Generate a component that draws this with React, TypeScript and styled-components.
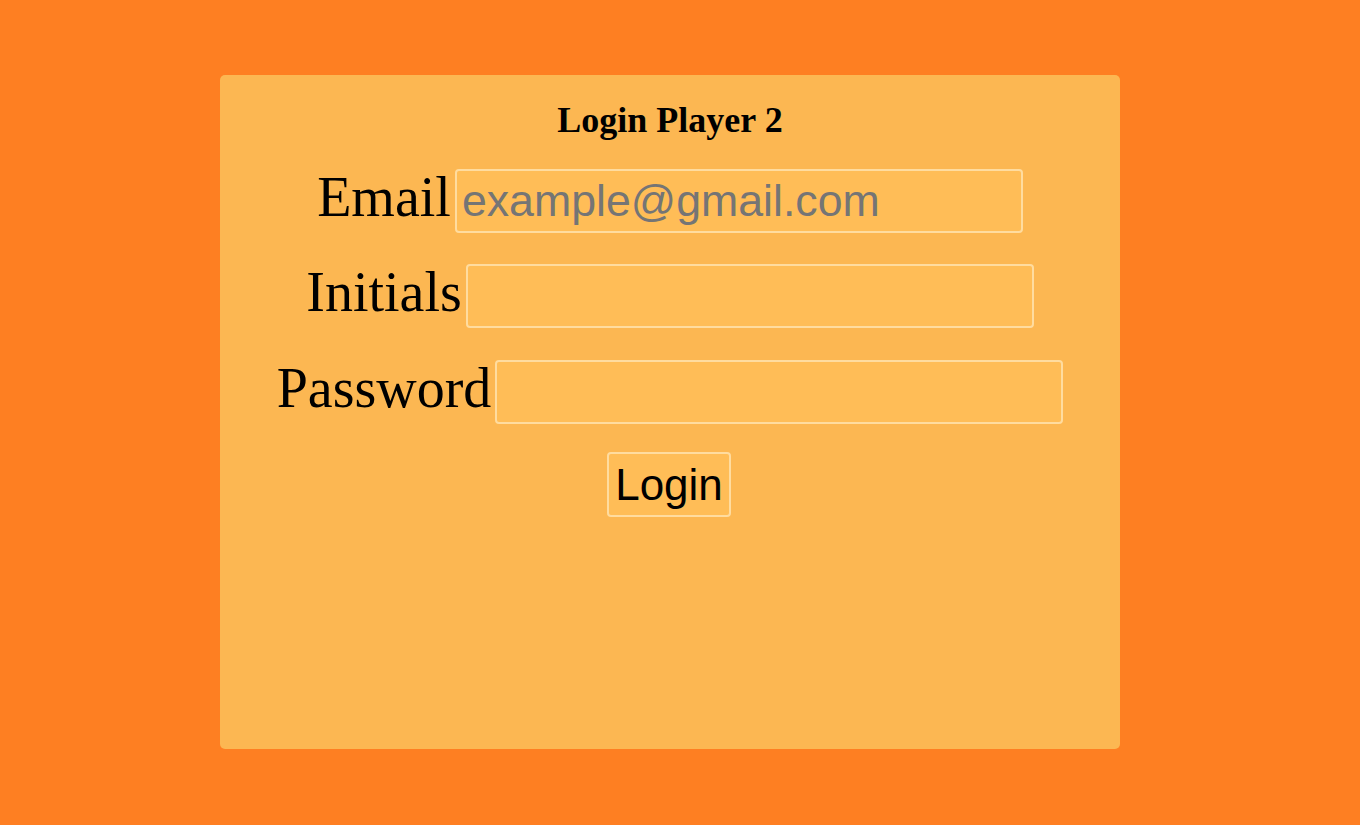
import React from "react";
import styled, { createGlobalStyle } from "styled-components";

const Global = createGlobalStyle`
  html, body { margin: 0; padding: 0; }
  body {
    background: #fe7f22;
    font-family: "Liberation Serif", "Times New Roman", serif;
    min-height: 825px;
  }
`;

const Page = styled.div`
  display: flex;
  padding: 75px 0 0 220px;
`;

const Card = styled.div`
  width: 900px;
  height: 674px;
  background: #fcb752;
  border-radius: 5px;
  box-sizing: border-box;
  padding-top: 99px;
  display: flex;
  flex-direction: column;
  align-items: center;
  position: relative;
`;

const Title = styled.h1`
  position: absolute;
  top: 24px;
  left: 0;
  right: 0;
  margin: 0;
  text-align: center;
  font-size: 36px;
  font-weight: bold;
  color: #000;
`;

const Row = styled.div<{ $top: number }>`
  margin-top: ${(p) => p.$top}px;
  text-align: center;
  white-space: nowrap;
  line-height: 63px;
  height: 63px;
`;

const Label = styled.label`
  font-family: "Liberation Serif", "Times New Roman", serif;
  font-size: 56px;
  color: #000;
`;

const Input = styled.input`
  box-sizing: border-box;
  width: 568px;
  height: 64px;
  font-family: "Liberation Sans", Arial, sans-serif;
  font-size: 44.7px;
  padding: 0 5px;
  background: #ffbd57;
  border: 2px solid #ffdc9f;
  border-radius: 4px;
  color: #000;
  outline: none;
  vertical-align: baseline;
  &::placeholder { color: #757575; }
`;

const Button = styled.button`
  box-sizing: border-box;
  height: 65px;
  padding: 0 6px;
  font-family: "Liberation Sans", Arial, sans-serif;
  font-size: 44px;
  background: #ffbd57;
  border: 2px solid #ffdc9f;
  border-radius: 4px;
  color: #000;
  cursor: pointer;
`;

const ButtonRow = styled.div`
  margin-top: 32px;
  display: flex;
  justify-content: center;
  transform: translateX(-1px);
`;

export default function App() {
  return (
    <>
      <Global />
      <Page>
        <Card>
          <Title>Login Player 2</Title>
          <Row $top={-8}>
            <Label>Email</Label> <Input type="email" placeholder="example@gmail.com" />
          </Row>
          <Row $top={32}>
            <Label>Initials</Label> <Input type="text" />
          </Row>
          <Row $top={33}>
            <Label>Password</Label> <Input type="password" />
          </Row>
          <ButtonRow>
            <Button>Login</Button>
          </ButtonRow>
        </Card>
      </Page>
    </>
  );
}
